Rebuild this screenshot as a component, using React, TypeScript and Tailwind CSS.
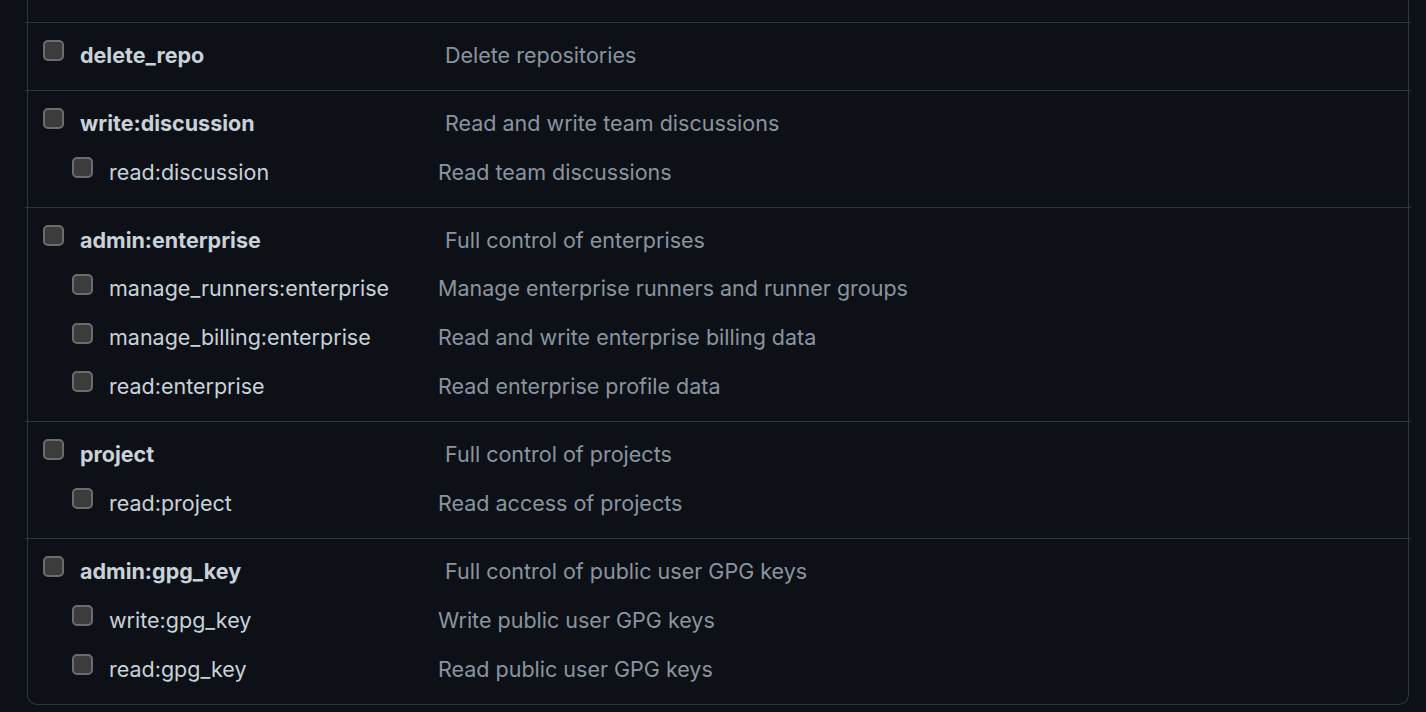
import React from "react";

type Row = { name: string; desc: string };
type Section = { main: Row; subs: Row[] };

const sections: Section[] = [
  { main: { name: "delete_repo", desc: "Delete repositories" }, subs: [] },
  {
    main: { name: "write:discussion", desc: "Read and write team discussions" },
    subs: [{ name: "read:discussion", desc: "Read team discussions" }],
  },
  {
    main: { name: "admin:enterprise", desc: "Full control of enterprises" },
    subs: [
      { name: "manage_runners:enterprise", desc: "Manage enterprise runners and runner groups" },
      { name: "manage_billing:enterprise", desc: "Read and write enterprise billing data" },
      { name: "read:enterprise", desc: "Read enterprise profile data" },
    ],
  },
  {
    main: { name: "project", desc: "Full control of projects" },
    subs: [{ name: "read:project", desc: "Read access of projects" }],
  },
  {
    main: { name: "admin:gpg_key", desc: "Full control of public user GPG keys" },
    subs: [
      { name: "write:gpg_key", desc: "Write public user GPG keys" },
      { name: "read:gpg_key", desc: "Read public user GPG keys" },
    ],
  },
];

function Box() {
  return (
    <span className="mt-[8px] block h-[21px] w-[21px] shrink-0 self-start rounded-[5px] border-2 border-[#6b6c6e] bg-[#3c3c3d]" />
  );
}

export default function App() {
  return (
    <div
      className="h-[712px] w-[1426px] overflow-hidden bg-[#0d1117] text-[21.5px]"
      style={{ fontFamily: "Inter, 'Noto Sans', sans-serif" }}
    >
      <div className="ml-[27px] w-[1382px] rounded-b-[10px] border border-t-0 border-[#30363d] pt-[22px]">
        {sections.map((s, i) => (
          <div key={i}>
            <div className="mx-[-3px] h-px bg-[#30363d]" />
            <div className="py-[9.07px]">
              <div className="flex h-[48.85px] items-center pb-[2.5px] pl-[15px]">
                <Box />
                <span className="ml-[16px] w-[365px] shrink-0 font-bold text-[#c9d1d9]">{s.main.name}</span>
                <span className="text-[#8b949e]">{s.main.desc}</span>
              </div>
              {s.subs.map((r, j) => (
                <div key={j} className="flex h-[48.85px] items-center pb-[3px] pl-[44px]">
                  <Box />
                  <span className="ml-[16px] w-[329px] shrink-0 text-[#c9d1d9]">{r.name}</span>
                  <span className="text-[#8b949e]">{r.desc}</span>
                </div>
              ))}
            </div>
          </div>
        ))}
      </div>
    </div>
  );
}
